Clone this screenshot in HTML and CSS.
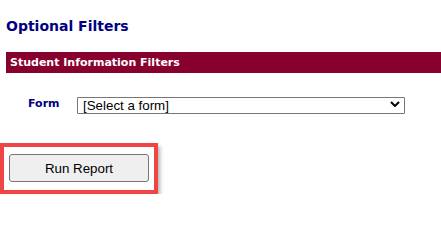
FILE: index.html
```html
<!DOCTYPE html>
<html lang="en">
<head>
<meta charset="utf-8">
<title>Optional Filters</title>
<link rel="stylesheet" href="styles.css">
</head>
<body>
<div class="page">
  <h2 class="title">Optional Filters</h2>
  <div class="bar">Student Information Filters</div>
  <div class="form-row">
    <label class="form-label" for="form-select">Form</label>
    <div class="select-wrap">
      <select id="form-select" class="select">
        <option>[Select a form]</option>
      </select>
      <svg class="chevron" width="10" height="6" viewBox="0 0 10 6" aria-hidden="true">
        <path d="M1 1 L5 5 L9 1" fill="none" stroke="#000" stroke-width="2"/>
      </svg>
    </div>
  </div>
  <div class="run-box">
    <button class="run-btn" type="button">Run Report</button>
  </div>
</div>
</body>
</html>
```

FILE: styles.css
```css
html, body {
  margin: 0;
  padding: 0;
  background: #ffffff;
}

body {
  font-family: "DejaVu Sans", Verdana, sans-serif;
}

.page {
  padding-top: 18px;
}

.title {
  margin: 0 0 0 6px;
  font-size: 14px;
  line-height: 17px;
  font-weight: bold;
  color: #000080;
}

.bar {
  margin: 17px 0 0 6px;
  height: 21px;
  line-height: 21px;
  padding-left: 4px;
  background: #88002d;
  color: #ffffff;
  font-size: 11px;
  font-weight: bold;
}

.form-row {
  display: flex;
  align-items: center;
  margin-top: 22px;
  padding-left: 28px;
}

.form-label {
  width: 49px;
  font-size: 11px;
  font-weight: bold;
  color: #000080;
}

.select-wrap {
  position: relative;
  width: 328px;
  height: 17px;
}

.select {
  appearance: none;
  -webkit-appearance: none;
  box-sizing: border-box;
  width: 100%;
  height: 17px;
  margin: 0;
  padding: 0 0 0 5px;
  border: 1px solid #767676;
  border-radius: 1px;
  background: #ffffff;
  color: #000000;
  font-family: "Liberation Sans", Arial, sans-serif;
  font-size: 13.33px;
  line-height: 15px;
}

.chevron {
  position: absolute;
  right: 5px;
  top: 6px;
  pointer-events: none;
}

.run-box {
  box-sizing: border-box;
  width: 158px;
  margin-top: 31px;
  padding: 7px 5px 8px 5px;
  border: 4px solid #f04545;
  box-shadow: 2px 3px 4px rgba(0, 0, 0, 0.3);
}

.run-btn {
  box-sizing: border-box;
  display: block;
  width: 140px;
  height: 28px;
  margin: 0;
  padding: 0;
  border: 1px solid #767676;
  border-radius: 3px;
  background: #efefef;
  color: #000000;
  font-family: "Liberation Sans", Arial, sans-serif;
  font-size: 13.33px;
}
```
